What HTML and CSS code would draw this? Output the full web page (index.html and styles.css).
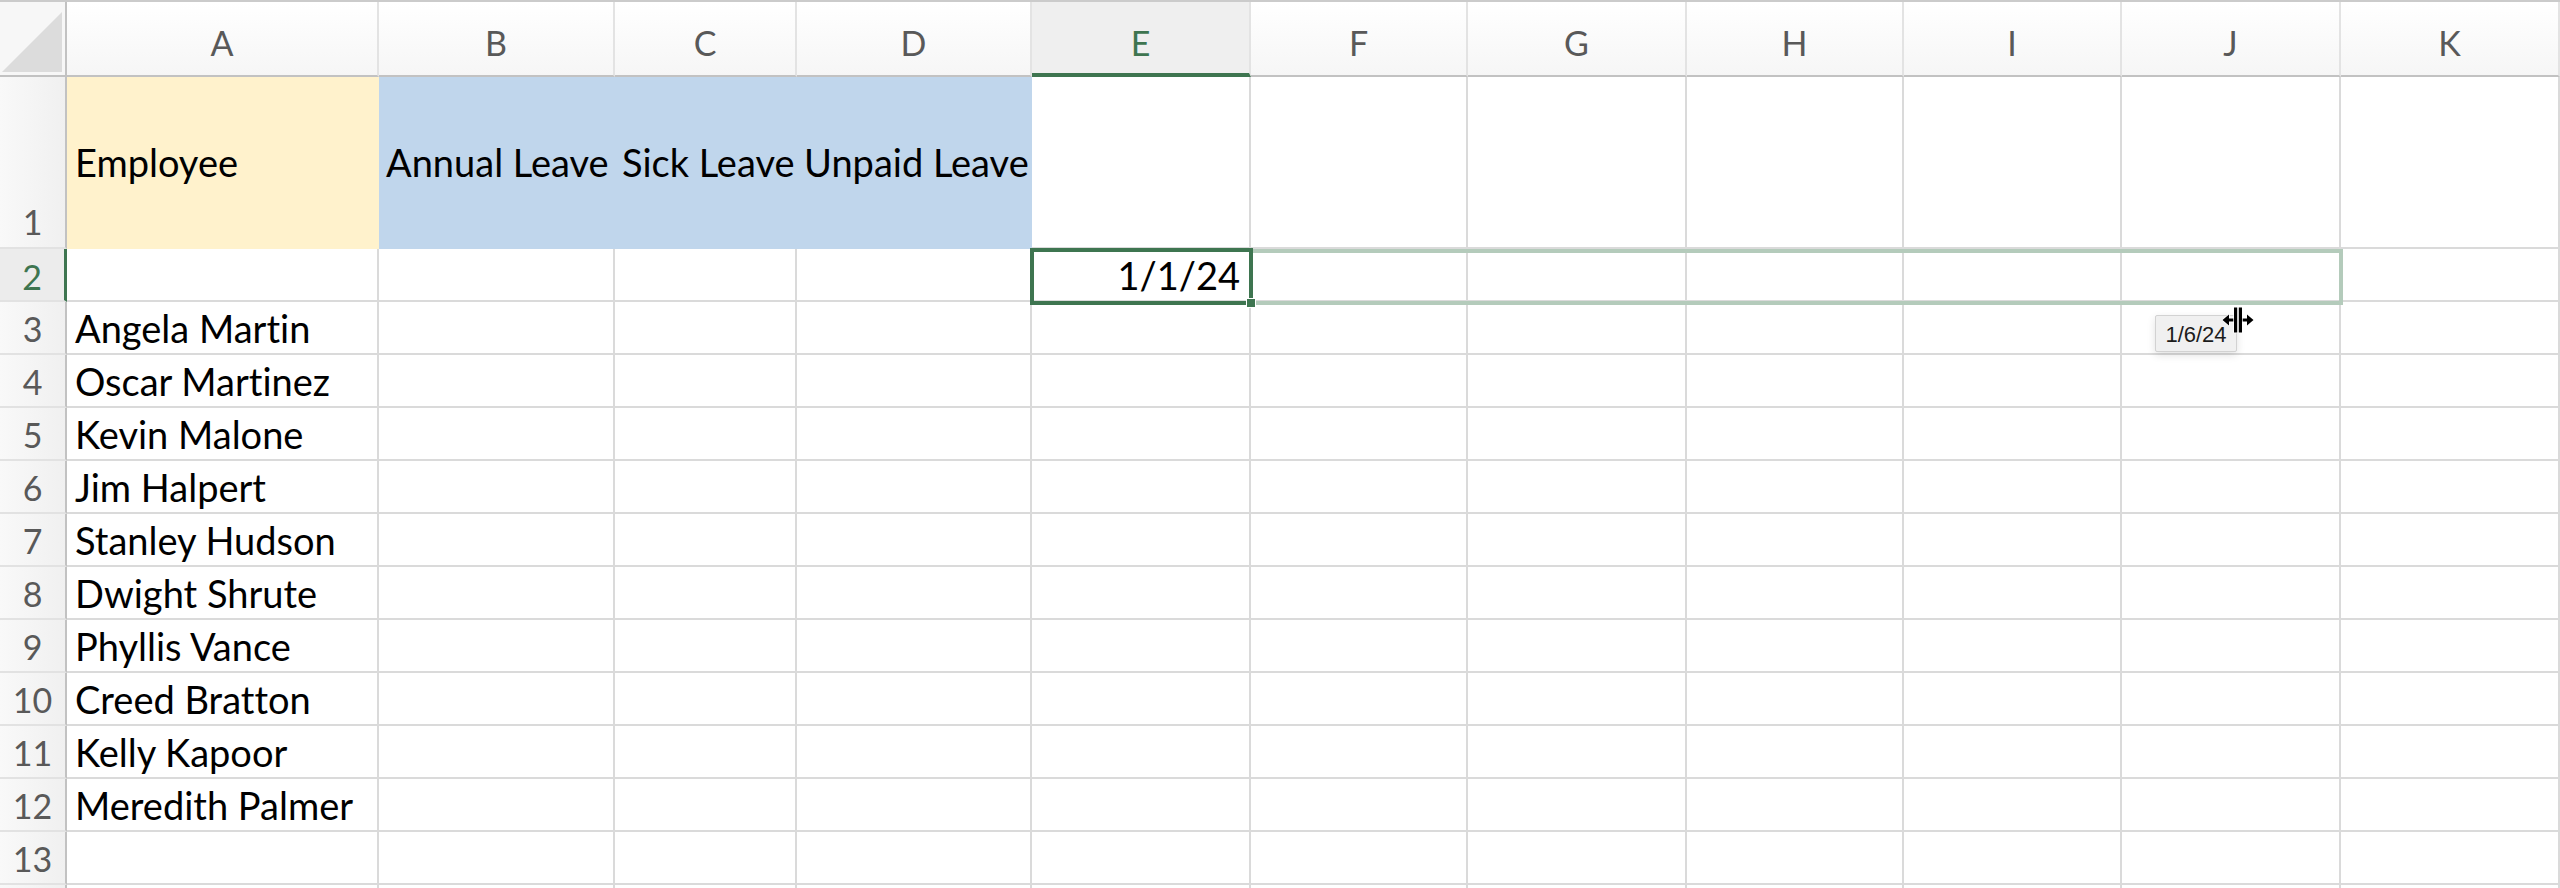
FILE: index.html
```html
<!DOCTYPE html>
<html>
<head>
<meta charset="utf-8">
<title>Sheet</title>
<link rel="stylesheet" href="styles.css">
</head>
<body>
<div class="sheet">
  <div class="row hdr">
    <div class="corner"><svg class="tri" viewBox="0 0 60 60" width="60" height="60"><polygon points="0,60 60,0 60,60" fill="#dcdcdc"/></svg></div>
    <div class="h">A</div><div class="h">B</div><div class="h">C</div><div class="h">D</div>
    <div class="h sel">E</div><div class="h">F</div><div class="h">G</div><div class="h">H</div>
    <div class="h">I</div><div class="h">J</div><div class="h">K</div>
  </div>
  <div class="row tall">
    <div class="rh bottom">1</div>
    <div class="c gold">Employee</div>
    <div class="c blue">Annual Leave</div>
    <div class="c blue">Sick Leave</div>
    <div class="c blue">Unpaid Leave</div>
    <div class="c"></div><div class="c"></div><div class="c"></div><div class="c"></div><div class="c"></div><div class="c"></div><div class="c"></div>
  </div>
  <div class="row">
    <div class="rh selrow">2</div>
    <div class="c"></div><div class="c"></div><div class="c"></div><div class="c"></div>
    <div class="c num">1/1/24</div>
    <div class="c"></div><div class="c"></div><div class="c"></div><div class="c"></div><div class="c"></div><div class="c"></div>
  </div>
  <div class="row"><div class="rh">3</div><div class="c">Angela Martin</div><div class="c"></div><div class="c"></div><div class="c"></div><div class="c"></div><div class="c"></div><div class="c"></div><div class="c"></div><div class="c"></div><div class="c"></div><div class="c"></div></div>
  <div class="row"><div class="rh">4</div><div class="c">Oscar Martinez</div><div class="c"></div><div class="c"></div><div class="c"></div><div class="c"></div><div class="c"></div><div class="c"></div><div class="c"></div><div class="c"></div><div class="c"></div><div class="c"></div></div>
  <div class="row"><div class="rh">5</div><div class="c">Kevin Malone</div><div class="c"></div><div class="c"></div><div class="c"></div><div class="c"></div><div class="c"></div><div class="c"></div><div class="c"></div><div class="c"></div><div class="c"></div><div class="c"></div></div>
  <div class="row"><div class="rh">6</div><div class="c">Jim Halpert</div><div class="c"></div><div class="c"></div><div class="c"></div><div class="c"></div><div class="c"></div><div class="c"></div><div class="c"></div><div class="c"></div><div class="c"></div><div class="c"></div></div>
  <div class="row"><div class="rh">7</div><div class="c">Stanley Hudson</div><div class="c"></div><div class="c"></div><div class="c"></div><div class="c"></div><div class="c"></div><div class="c"></div><div class="c"></div><div class="c"></div><div class="c"></div><div class="c"></div></div>
  <div class="row"><div class="rh">8</div><div class="c">Dwight Shrute</div><div class="c"></div><div class="c"></div><div class="c"></div><div class="c"></div><div class="c"></div><div class="c"></div><div class="c"></div><div class="c"></div><div class="c"></div><div class="c"></div></div>
  <div class="row"><div class="rh">9</div><div class="c">Phyllis Vance</div><div class="c"></div><div class="c"></div><div class="c"></div><div class="c"></div><div class="c"></div><div class="c"></div><div class="c"></div><div class="c"></div><div class="c"></div><div class="c"></div></div>
  <div class="row"><div class="rh">10</div><div class="c">Creed Bratton</div><div class="c"></div><div class="c"></div><div class="c"></div><div class="c"></div><div class="c"></div><div class="c"></div><div class="c"></div><div class="c"></div><div class="c"></div><div class="c"></div></div>
  <div class="row"><div class="rh">11</div><div class="c">Kelly Kapoor</div><div class="c"></div><div class="c"></div><div class="c"></div><div class="c"></div><div class="c"></div><div class="c"></div><div class="c"></div><div class="c"></div><div class="c"></div><div class="c"></div></div>
  <div class="row"><div class="rh">12</div><div class="c">Meredith Palmer</div><div class="c"></div><div class="c"></div><div class="c"></div><div class="c"></div><div class="c"></div><div class="c"></div><div class="c"></div><div class="c"></div><div class="c"></div><div class="c"></div></div>
  <div class="row"><div class="rh">13</div><div class="c"></div><div class="c"></div><div class="c"></div><div class="c"></div><div class="c"></div><div class="c"></div><div class="c"></div><div class="c"></div><div class="c"></div><div class="c"></div><div class="c"></div></div>
  <div class="row"><div class="rh"></div><div class="c"></div><div class="c"></div><div class="c"></div><div class="c"></div><div class="c"></div><div class="c"></div><div class="c"></div><div class="c"></div><div class="c"></div><div class="c"></div><div class="c"></div></div>

  <div class="range"></div>
  <div class="active"></div>
  <div class="handle"></div>
  <div class="tip">1/6/24</div>
  <svg class="cursor" viewBox="0 0 34 28" width="34" height="28">
    <g fill="#000" stroke="#fff" stroke-width="1.4" stroke-linejoin="round" paint-order="stroke">
      <polygon points="1.5,14 8,8.5 8,12.5 13,12.5 13,15.5 8,15.5 8,19.5"/>
      <polygon points="32.5,14 26,8.5 26,12.5 21,12.5 21,15.5 26,15.5 26,19.5"/>
      <rect x="13" y="1.5" width="3.2" height="25"/>
      <rect x="17.8" y="1.5" width="3.2" height="25"/>
    </g>
  </svg>
</div>
</body>
</html>
```
FILE: styles.css
```css
* { box-sizing: border-box; margin: 0; padding: 0; }
html, body { width: 2560px; height: 888px; overflow: hidden; background: #fff; }
body {
  font-family: Lato, "Liberation Sans", sans-serif;
  font-variant-ligatures: none;
  font-feature-settings: "liga" 0, "clig" 0;
}

.sheet { position: relative; height: 888px; overflow: hidden; border-top: 2px solid #cbcbcb; }

.row {
  display: grid;
  grid-template-columns: 67px 312px 236px 182px 235px 219px 217px 219px 217px 218px 219px 219px;
  height: 53px;
}
.row.hdr { height: 75px; }
.row.tall { height: 172px; }

.corner {
  position: relative;
  background: #f7f7f7;
  border-right: 2px solid #c2c2c2;
  border-bottom: 2px solid #c2c2c2;
  display: flex;
  align-items: flex-end;
  padding: 0 3px 3px 2px;
}
.tri { display: block; width: 60px; height: 60px; }

.h {
  background: linear-gradient(#ffffff, #f6f6f6);
  border-right: 2px solid #e3e3e3;
  border-bottom: 2px solid #c2c2c2;
  display: flex;
  align-items: center;
  justify-content: center;
  padding-top: 8px;
  font-size: 34px;
  line-height: 1;
  color: #595959;
}
.h.sel {
  background: #efefef;
  border-bottom: 4px solid #3e7550;
  color: #3e7550;
  padding-top: 10px;
}

.rh {
  background: linear-gradient(to right, #f9f9f9, #f0f0f0);
  border-right: 2px solid #c2c2c2;
  border-bottom: 2px solid #e2e2e2;
  display: flex;
  align-items: center;
  justify-content: center;
  font-size: 34px;
  line-height: 1;
  color: #595959;
  padding-top: 2px;
}
.rh.bottom { align-items: flex-end; padding-bottom: 8px; }
.rh.selrow {
  background: #ececec;
  border-right: 3px solid #3e7550;
  color: #3e7550;
  padding-top: 4px;
}

.c {
  border-right: 2px solid #dadada;
  border-bottom: 2px solid #dadada;
  display: flex;
  align-items: center;
  padding-left: 8px;
  font-size: 38px;
  line-height: 1;
  color: #000;
  white-space: nowrap;
}
.c.gold { background: #fff2cc; border-color: transparent; }
.c.blue { background: #c0d6ec; border-color: transparent; padding-left: 7px; }
.c.num { justify-content: flex-end; padding-right: 9px; padding-left: 0; }

.range {
  position: absolute;
  left: 1251px;
  top: 247px;
  width: 1092px;
  height: 56px;
  border: 4px solid #b4cbbb;
  border-left: none;
}
.active {
  position: absolute;
  left: 1030px;
  top: 246px;
  width: 223px;
  height: 57px;
  border: 4px solid #3e7550;
}
.handle {
  position: absolute;
  left: 1246px;
  top: 296px;
  width: 10px;
  height: 10px;
  background: #3e7550;
  border: 1px solid #fff;
}
.tip {
  position: absolute;
  left: 2155px;
  top: 313px;
  width: 82px;
  height: 37px;
  background: #f0f0f0;
  border: 1px solid #d2d2d2;
  border-radius: 2px;
  box-shadow: 0 3px 8px rgba(0,0,0,0.12);
  font-family: "Liberation Sans", Arial, sans-serif;
  font-size: 22px;
  color: #1c1c1c;
  display: flex;
  align-items: center;
  justify-content: center;
  padding-top: 2px;
}
.cursor {
  position: absolute;
  left: 2221px;
  top: 304px;
  width: 34px;
  height: 28px;
}
```
